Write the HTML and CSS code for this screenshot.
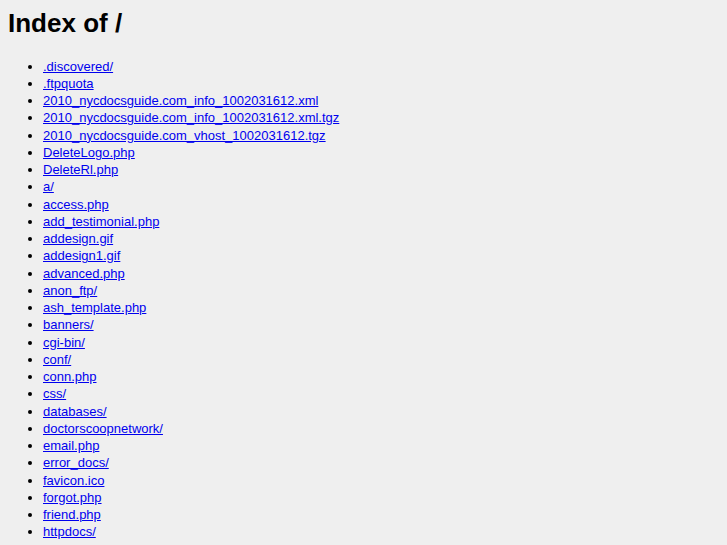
FILE: index.html
```html
<!DOCTYPE html>
<html>
<head>
<meta charset="utf-8">
<title>Index of /</title>
<link rel="stylesheet" href="styles.css">
</head>
<body>
<h1 class="title">Index of /</h1>
<ul class="listing">
<li><a href="#">.discovered/</a></li>
<li><a href="#">.ftpquota</a></li>
<li><a href="#">2010_nycdocsguide.com_info_1002031612.xml</a></li>
<li><a href="#">2010_nycdocsguide.com_info_1002031612.xml.tgz</a></li>
<li><a href="#">2010_nycdocsguide.com_vhost_1002031612.tgz</a></li>
<li><a href="#">DeleteLogo.php</a></li>
<li><a href="#">DeleteRl.php</a></li>
<li><a href="#">a/</a></li>
<li><a href="#">access.php</a></li>
<li><a href="#">add_testimonial.php</a></li>
<li><a href="#">addesign.gif</a></li>
<li><a href="#">addesign1.gif</a></li>
<li><a href="#">advanced.php</a></li>
<li><a href="#">anon_ftp/</a></li>
<li><a href="#">ash_template.php</a></li>
<li><a href="#">banners/</a></li>
<li><a href="#">cgi-bin/</a></li>
<li><a href="#">conf/</a></li>
<li><a href="#">conn.php</a></li>
<li><a href="#">css/</a></li>
<li><a href="#">databases/</a></li>
<li><a href="#">doctorscoopnetwork/</a></li>
<li><a href="#">email.php</a></li>
<li><a href="#">error_docs/</a></li>
<li><a href="#">favicon.ico</a></li>
<li><a href="#">forgot.php</a></li>
<li><a href="#">friend.php</a></li>
<li><a href="#">httpdocs/</a></li>
</ul>
</body>
</html>
```
FILE: styles.css
```css
html { background: #efefef; }
body {
  margin: 8px;
  font-family: "Liberation Sans", Arial, sans-serif;
  font-size: 13px;
  color: #000;
  background: #efefef;
}
.title {
  font-size: 26px;
  font-weight: bold;
  margin: 0 0 19.5px;
  line-height: 30px;
}
.listing {
  margin: 0;
  padding-left: 35px;
  line-height: 17.25px;
}
.listing a { color: #0000ee; }
```
